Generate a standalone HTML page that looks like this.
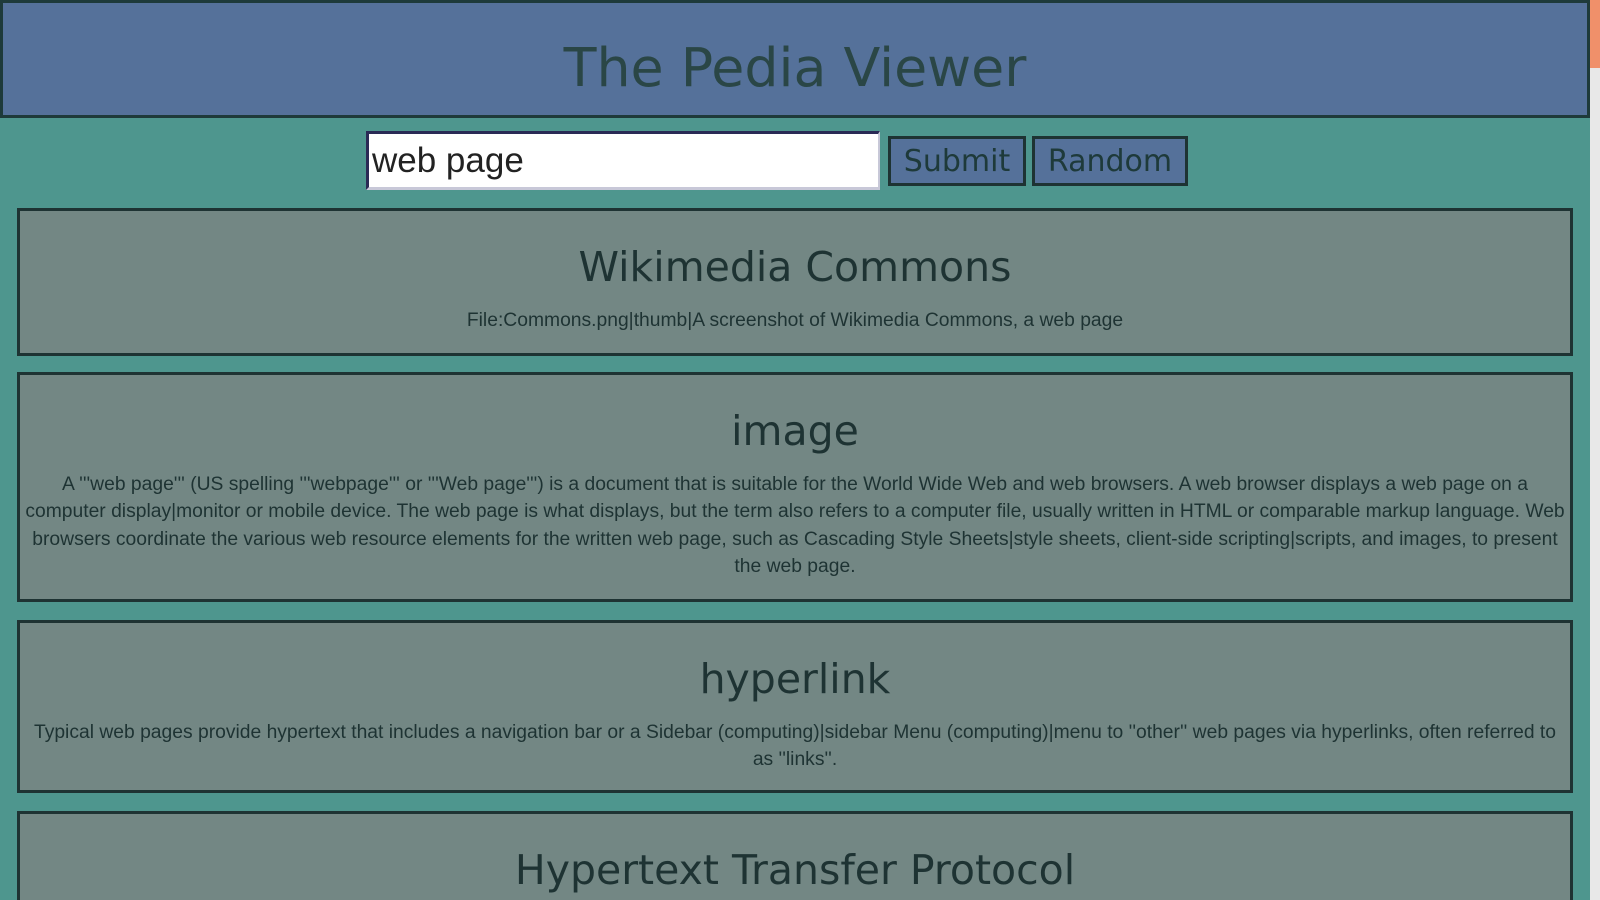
<!DOCTYPE html>
<html><head><meta charset="utf-8"><style>
html,body{margin:0;padding:0;overflow:hidden;height:900px;}
body{width:1600px;background:#4e968e;position:relative;font-family:"Liberation Sans",sans-serif;color:#1e3333;}
.sb{position:absolute;right:0;top:0;width:10px;height:900px;background:#e8e8e8;}
.sb div{width:10px;height:68px;background:#f0906a;}
header{position:absolute;left:0;top:0;width:1584px;height:112px;background:#55719a;border:3px solid #1e3a3a;text-align:center;}
header h1{margin:0;font-family:"DejaVu Sans",sans-serif;font-weight:normal;font-size:53.8px;line-height:130px;height:112px;color:#2a4646;}
.in{position:absolute;left:366px;top:131px;border-top:3px solid #2a2a55;border-left:3px solid #2a2a55;border-right:2px solid #c8c8d8;border-bottom:3px solid #c8c8d8;box-sizing:border-box;width:514px;height:59px;font-size:35px;line-height:54px;padding-left:3px;color:#222;background:#fff;}
.btn{position:absolute;top:136px;height:50px;box-sizing:border-box;border:3px solid #1e3333;background:#55719a;font-family:"DejaVu Sans",sans-serif;font-size:30px;line-height:46px;text-align:center;color:#1e3a3a;}
.card{position:absolute;left:17px;width:1556px;box-sizing:border-box;border:3px solid #1e3333;background:#738784;text-align:center;padding:0;overflow:hidden;}
.card h2{margin:31px 0 14px;font-family:"DejaVu Sans",sans-serif;font-weight:normal;font-size:41px;line-height:50px;color:#1e3333;}
.card p{margin:0 -2px;font-size:19.3px;line-height:27.4px;position:relative;top:1px;}
</style></head><body>
<header><h1>The Pedia Viewer</h1></header>
<div class="sb"><div></div></div>
<div class="in">web page</div>
<div class="btn" style="left:888px;width:138px">Submit</div>
<div class="btn" style="left:1032px;width:156px">Random</div>
<div class="card" style="top:208px;height:148px"><h2>Wikimedia Commons</h2><p>File:Commons.png|thumb|A screenshot of Wikimedia Commons, a web page</p></div>
<div class="card" style="top:372px;height:230px"><h2>image</h2><p>A '''web page''' (US spelling '''webpage''' or '''Web page''') is a document that is suitable for the World Wide Web and web browsers. A web browser displays a web page on a<br>computer display|monitor or mobile device. The web page is what displays, but the term also refers to a computer file, usually written in HTML or comparable markup language. Web<br>browsers coordinate the various web resource elements for the written web page, such as Cascading Style Sheets|style sheets, client-side scripting|scripts, and images, to present<br>the web page.</p></div>
<div class="card" style="top:620px;height:173px"><h2>hyperlink</h2><p>Typical web pages provide hypertext that includes a navigation bar or a Sidebar (computing)|sidebar Menu (computing)|menu to ''other'' web pages via hyperlinks, often referred to<br>as ''links''.</p></div>
<div class="card" style="top:811px;height:120px"><h2>Hypertext Transfer Protocol</h2></div>
</body></html>
